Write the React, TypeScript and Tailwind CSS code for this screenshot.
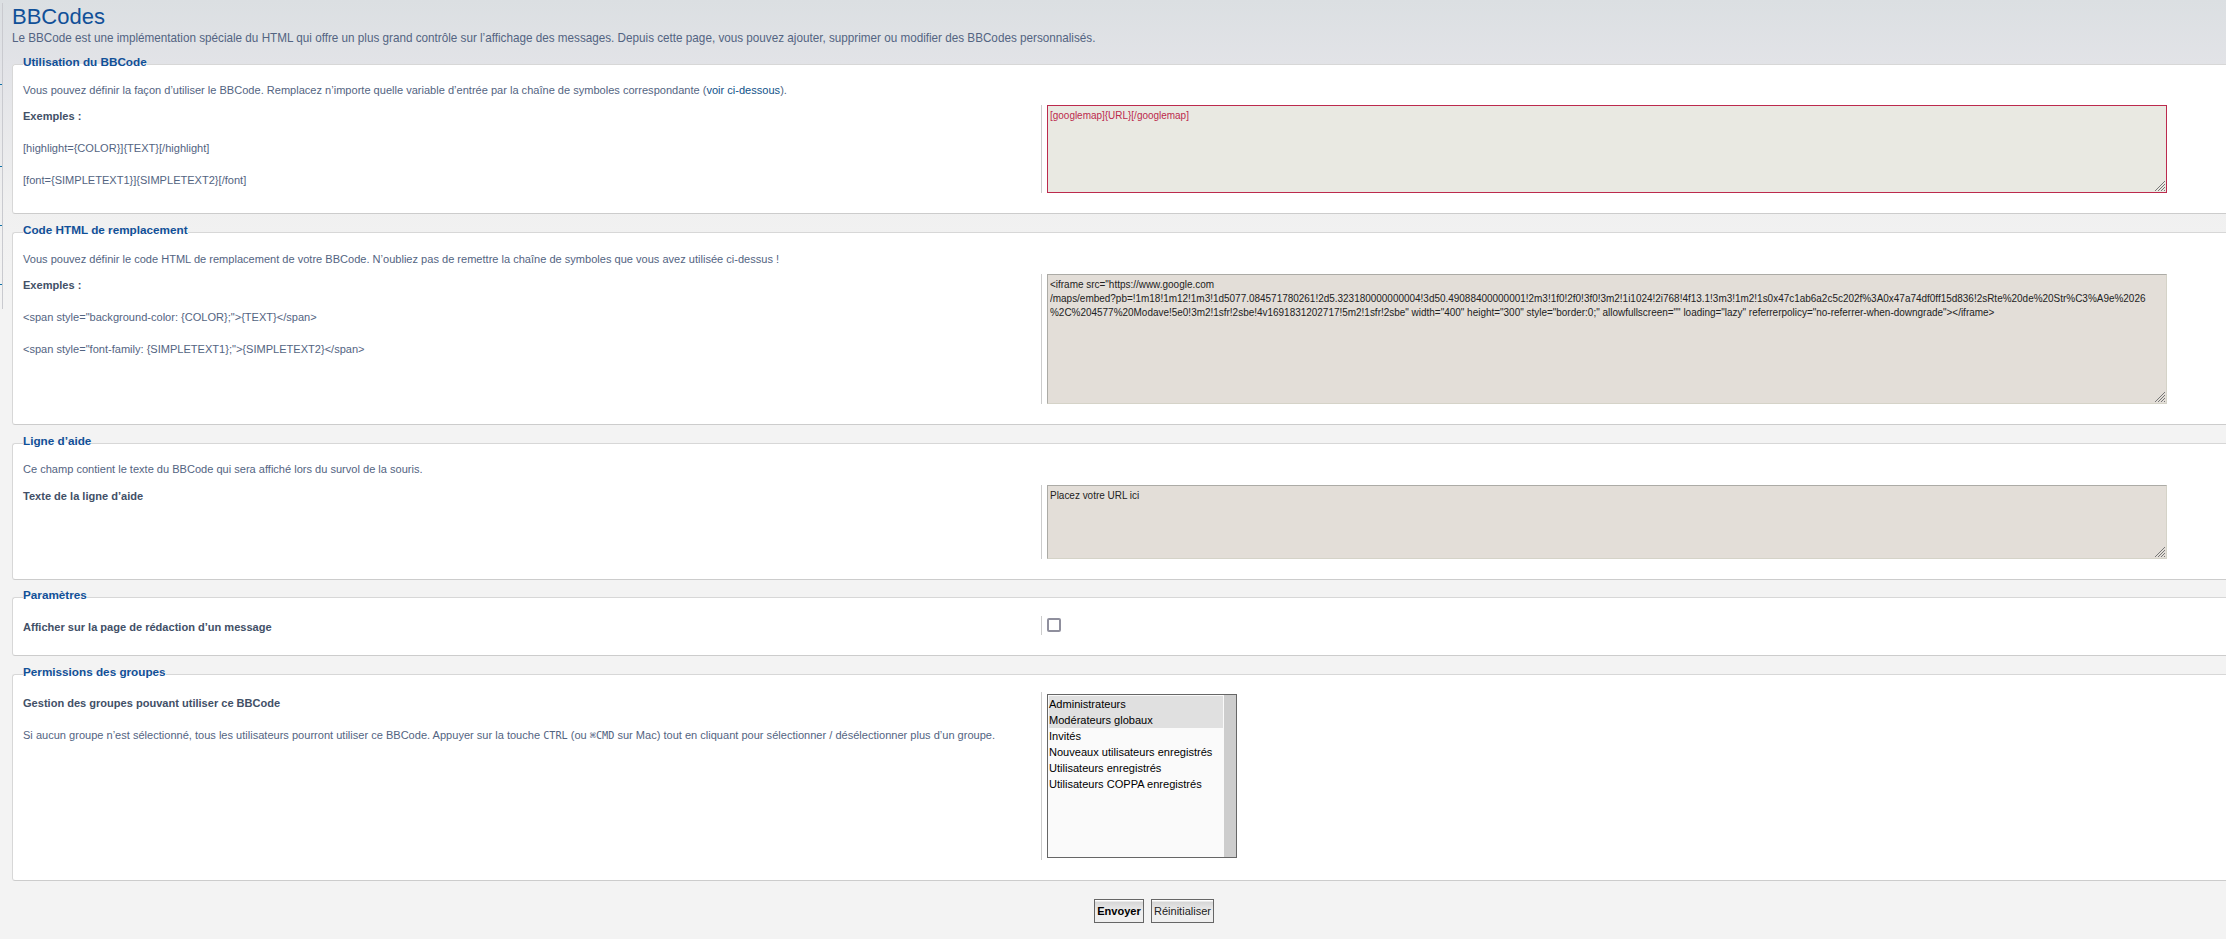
import type { ReactNode } from "react";

function Panel({ title, size, children }: { title: string; size: string; children: ReactNode }) {
  return (
    <fieldset
      className={`${size} shrink-0 min-w-0 rounded-l-[3px] border border-r-0 border-[#d7d7d7] border-b-[#cccccc] bg-white px-2.5`}
    >
      <legend className="pb-[5px] text-[11.72px] leading-3 font-bold text-[#115098]">{title}</legend>
      {children}
    </fieldset>
  );
}

function Row({ label, notes = [], className, children }: { label: string; notes?: ReactNode[]; className: string; children: ReactNode }) {
  return (
    <div className={`flex ${className}`}>
      <div className="flex w-[1018px] shrink-0 flex-col gap-5 pt-[5px]">
        <label className="leading-3 font-bold text-[#425067]">{label}</label>
        {notes.map((note, i) => (
          <p key={i} className="leading-3">{note}</p>
        ))}
      </div>
      <div className="border-l border-[#cccccc] pl-[5px]">{children}</div>
    </div>
  );
}

function TextBox({ lines, className }: { lines: string[]; className: string }) {
  return (
    <div className={`relative w-[1120px] border pt-0.5 pl-0.5 text-[11px] leading-[14px] ${className}`}>
      {lines.map((line) => (
        <p key={line} className="origin-left scale-x-[0.905]">{line}</p>
      ))}
      <svg className="absolute right-px bottom-px" width="10" height="10" viewBox="0 0 10 10" stroke="#777" strokeWidth="1" fill="none">
        <path d="M0 10L10 0M3 10L10 3M6 10L10 6M9 10L10 9" />
      </svg>
    </div>
  );
}

const inset = "border-[#d5d3c8] border-t-[#acaba6] border-l-[#acaba6] bg-[#e3ded8] text-[#222222]";

const groups = [
  { name: "Administrateurs", selected: true },
  { name: "Modérateurs globaux", selected: true },
  { name: "Invités", selected: false },
  { name: "Nouveaux utilisateurs enregistrés", selected: false },
  { name: "Utilisateurs enregistrés", selected: false },
  { name: "Utilisateurs COPPA enregistrés", selected: false },
];

export default function App() {
  return (
    <div className="flex h-[939px] w-full overflow-hidden bg-[#f3f3f3] bg-[linear-gradient(to_bottom,#dbdfe2_0px,#e2e3e7_64px,#f0f0f0_205px,#f3f3f3_300px)] font-['Liberation_Sans',Arial,sans-serif] text-[11.06px] whitespace-nowrap text-[#536482]">
      <div className="flex h-[309px] w-3 shrink-0 flex-col pt-[3px]">
        <div className="h-[306px] w-[3px] border-r border-[#c9cacf]">
          <div className="mt-[81px] h-px w-0.5 bg-[#0d71a7]" />
          <div className="mt-[81px] h-px w-0.5 bg-[#0d71a7]" />
          <div className="mt-[58px] h-px w-0.5 bg-[#0d71a7]" />
          <div className="mt-[58px] h-px w-0.5 bg-[#0d71a7]" />
        </div>
      </div>

      <main className="flex min-w-0 flex-1 flex-col pt-1.5">
        <h1 className="origin-left scale-x-[0.978] text-[22.5px] leading-[22px] text-[#115098]">BBCodes</h1>
        <p className="mt-1 mb-3 origin-left scale-x-[0.9595] text-[12.2px] leading-3">
          Le BBCode est une implémentation spéciale du HTML qui offre un plus grand contrôle sur l’affichage des messages. Depuis cette page, vous pouvez ajouter, supprimer ou modifier des BBCodes personnalisés.
        </p>

        <Panel title="Utilisation du BBCode" size="h-[158px]">
          <p className="mt-[11px] leading-3">
            Vous pouvez définir la façon d’utiliser le BBCode. Remplacez n’importe quelle variable d’entrée par la chaîne de symboles correspondante (
            <a className="text-[#105289]">voir ci-dessous</a>).
          </p>
          <Row
            className="mt-[9px]"
            label="Exemples :"
            notes={["[highlight={COLOR}]{TEXT}[/highlight]", "[font={SIMPLETEXT1}]{SIMPLETEXT2}[/font]"]}
          >
            <TextBox className="h-[88px] border-[#bc2a4d] bg-[#e9e9e2] text-[#bc2a4d]" lines={["[googlemap]{URL}[/googlemap]"]} />
          </Row>
        </Panel>

        <div className="h-2.5 shrink-0" />
        <Panel title="Code HTML de remplacement" size="h-[201px]">
          <p className="mt-3 leading-3">
            Vous pouvez définir le code HTML de remplacement de votre BBCode. N’oubliez pas de remettre la chaîne de symboles que vous avez utilisée ci-dessus !
          </p>
          <Row
            className="mt-[9px]"
            label="Exemples :"
            notes={[
              '<span style="background-color: {COLOR};">{TEXT}</span>',
              '<span style="font-family: {SIMPLETEXT1};">{SIMPLETEXT2}</span>',
            ]}
          >
            <TextBox
              className={`h-[130px] ${inset}`}
              lines={[
                '<iframe src="https://www.google.com',
                "/maps/embed?pb=!1m18!1m12!1m3!1d5077.084571780261!2d5.323180000000004!3d50.49088400000001!2m3!1f0!2f0!3f0!3m2!1i1024!2i768!4f13.1!3m3!1m2!1s0x47c1ab6a2c5c202f%3A0x47a74df0ff15d836!2sRte%20de%20Str%C3%A9e%2026",
                '%2C%204577%20Modave!5e0!3m2!1sfr!2sbe!4v1691831202717!5m2!1sfr!2sbe" width="400" height="300" style="border:0;" allowfullscreen="" loading="lazy" referrerpolicy="no-referrer-when-downgrade"></iframe>',
              ]}
            />
          </Row>
        </Panel>

        <div className="h-2.5 shrink-0" />
        <Panel title="Ligne d’aide" size="h-[145px]">
          <p className="mt-[11px] leading-3">Ce champ contient le texte du BBCode qui sera affiché lors du survol de la souris.</p>
          <Row className="mt-2.5" label="Texte de la ligne d’aide">
            <TextBox className={`h-[74px] ${inset}`} lines={["Placez votre URL ici"]} />
          </Row>
        </Panel>

        <div className="h-[9px] shrink-0" />
        <Panel title="Paramètres" size="h-[67px]">
          <Row className="mt-2.5 h-[19px]" label="Afficher sur la page de rédaction d’un message">
            <div className="mt-0.5 size-3.5 rounded-[2px] border-2 border-[#8f8f9d] bg-white" />
          </Row>
        </Panel>

        <div className="h-2.5 shrink-0" />
        <Panel title="Permissions des groupes" size="h-[215px]">
          <Row
            className="mt-[9px] h-[168px]"
            label="Gestion des groupes pouvant utiliser ce BBCode"
            notes={[
              <>
                Si aucun groupe n’est sélectionné, tous les utilisateurs pourront utiliser ce BBCode. Appuyer sur la touche{" "}
                <kbd className="font-['DejaVu_Sans_Mono',monospace] text-[10.2px] leading-none">CTRL</kbd> (ou{" "}
                <kbd className="font-['DejaVu_Sans_Mono',monospace] text-[10.2px] leading-none">⌘CMD</kbd> sur Mac) tout en cliquant pour sélectionner / désélectionner plus d’un groupe.
              </>,
            ]}
          >
            <div className="mt-0.5 flex h-[164px] w-[190px] border border-[#666666] bg-[#fafafa]">
              <ul className="flex-1 p-px text-black">
                {groups.map((g) => (
                  <li key={g.name} className={`h-4 leading-4 ${g.selected ? "bg-[#e0e0e0]" : ""}`}>
                    {g.name}
                  </li>
                ))}
              </ul>
              <div className="w-3 bg-[#cdcdcd]" />
            </div>
          </Row>
        </Panel>

        <div className="flex gap-[7px] pt-[18px] pl-[1082px] text-black">
          <button className="h-6 w-[50px] border border-[#666666] bg-[linear-gradient(to_bottom,#ffffff_1px,#d6d6d6_2px,#efefef_12px)] leading-[22px] font-bold">
            Envoyer
          </button>
          <button className="h-6 w-[63px] border border-[#666666] bg-[linear-gradient(to_bottom,#ffffff_1px,#d6d6d6_2px,#efefef_12px)] leading-[22px] text-[#222222]">
            Réinitialiser
          </button>
        </div>
      </main>
    </div>
  );
}
